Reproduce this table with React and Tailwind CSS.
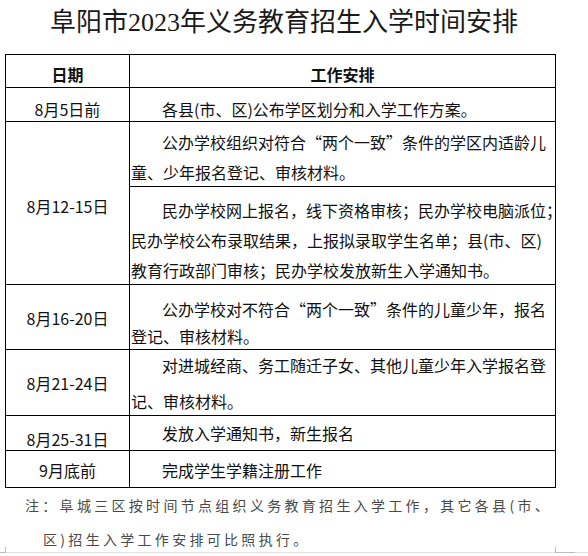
import React from "react";

const body = { fontFamily: '"Noto Sans CJK SC", "Noto Sans", sans-serif' };

function Line({ children, indent, lh = 30, mt = 0 }) {
  return (
    <div
      className={`whitespace-nowrap ${indent ? "pl-[32px]" : "pl-[1px]"}`}
      style={{ lineHeight: `${lh}px`, height: `${lh}px`, marginTop: mt }}
    >
      {children}
    </div>
  );
}

export default function App() {
  return (
    <div className="relative w-[588px] h-[556px] bg-white text-[#111] overflow-hidden" style={body}>
      {/* Title */}
      <div className="h-[54px] pt-[10px] pl-[50px]">
        <div
          className="text-[26px] leading-[26px] whitespace-nowrap text-[#1a1a1a]"
          style={{ fontFamily: '"Liberation Serif", "Noto Sans CJK SC", serif' }}
        >
          阜阳市2023年义务教育招生入学时间安排
        </div>
      </div>

      {/* Table */}
      <div className="ml-[5px] w-[551px] border border-black text-[16px]">
        {/* header */}
        <div className="flex h-[33px] border-b border-black font-bold">
          <div className="w-[124px] shrink-0 border-r border-black text-center pt-[4px] leading-[30px]">日期</div>
          <div className="flex-1 min-w-0 text-center pt-[4px] leading-[30px]">工作安排</div>
        </div>

        {/* row 1 */}
        <div className="flex h-[34px] border-b border-black">
          <div className="w-[124px] shrink-0 border-r border-black text-center pt-[6px] leading-[30px]">8月5日前</div>
          <div className="flex-1 min-w-0 pt-[6px]">
            <Line indent>各县(市、区)公布学区划分和入学工作方案。</Line>
          </div>
        </div>

        {/* row 2 */}
        <div className="flex h-[163px] border-b border-black">
          <div className="w-[124px] shrink-0 border-r border-black flex items-center justify-center pt-[5px] leading-[30px]">
            8月12-15日
          </div>
          <div className="flex-1 min-w-0 flex flex-col">
            <div className="h-[65px] border-b border-black pt-[5px]">
              <Line indent>公办学校组织对符合“两个一致”条件的学区内适龄儿</Line>
              <Line>童、少年报名登记、审核材料。</Line>
            </div>
            <div className="flex-1 pt-[8px]">
              <Line indent>民办学校网上报名，线下资格审核；民办学校电脑派位；</Line>
              <Line>民办学校公布录取结果，上报拟录取学生名单；县(市、区)</Line>
              <Line>教育行政部门审核；民办学校发放新生入学通知书。</Line>
            </div>
          </div>
        </div>

        {/* row 3 */}
        <div className="flex h-[65px] border-b border-black">
          <div className="w-[124px] shrink-0 border-r border-black flex items-center justify-center pt-[2px] leading-[30px]">
            8月16-20日
          </div>
          <div className="flex-1 min-w-0 pt-[11px]">
            <Line indent lh={27}>公办学校对不符合“两个一致”条件的儿童少年，报名</Line>
            <Line lh={27}>登记、审核材料。</Line>
          </div>
        </div>

        {/* row 4 */}
        <div className="flex h-[66px] border-b border-black">
          <div className="w-[124px] shrink-0 border-r border-black flex items-center justify-center leading-[30px]">
            8月21-24日
          </div>
          <div className="flex-1 min-w-0">
            <Line indent>对进城经商、务工随迁子女、其他儿童少年入学报名登</Line>
            <Line mt={6}>记、审核材料。</Line>
          </div>
        </div>

        {/* row 5 */}
        <div className="flex h-[35px] border-b border-black">
          <div className="w-[124px] shrink-0 border-r border-black text-center pt-[8px] leading-[30px]">8月25-31日</div>
          <div className="flex-1 min-w-0 pt-[2px]">
            <Line indent>发放入学通知书，新生报名</Line>
          </div>
        </div>

        {/* row 6 */}
        <div className="flex h-[36px]">
          <div className="w-[124px] shrink-0 border-r border-black text-center pt-[4px] leading-[30px]">9月底前</div>
          <div className="flex-1 min-w-0 pt-[4px]">
            <Line indent>完成学生学籍注册工作</Line>
          </div>
        </div>
      </div>

      {/* Note */}
      <div className="text-[14px] leading-[34px] tracking-[3.3px] text-[#4a4a4a] whitespace-nowrap">
        <div className="pl-[25px]">注：阜城三区按时间节点组织义务教育招生入学工作，其它各县(市、</div>
        <div className="pl-[43px]">区)招生入学工作安排可比照执行。</div>
      </div>

      {/* faint page border marks */}
      <div className="absolute left-0 right-0 bottom-[3px] h-px bg-[#e2e2e2]" />
      <div className="absolute left-[5px] bottom-[3px] w-px h-[6px] bg-[#bdbdbd]" />
      <div className="absolute left-0 bottom-[3px] w-[6px] h-px bg-[#bdbdbd]" />
      <div className="absolute left-[555px] bottom-[3px] w-px h-[6px] bg-[#bdbdbd]" />
      <div className="absolute left-[555px] bottom-[3px] w-[20px] h-px bg-[#bdbdbd]" />
    </div>
  );
}
